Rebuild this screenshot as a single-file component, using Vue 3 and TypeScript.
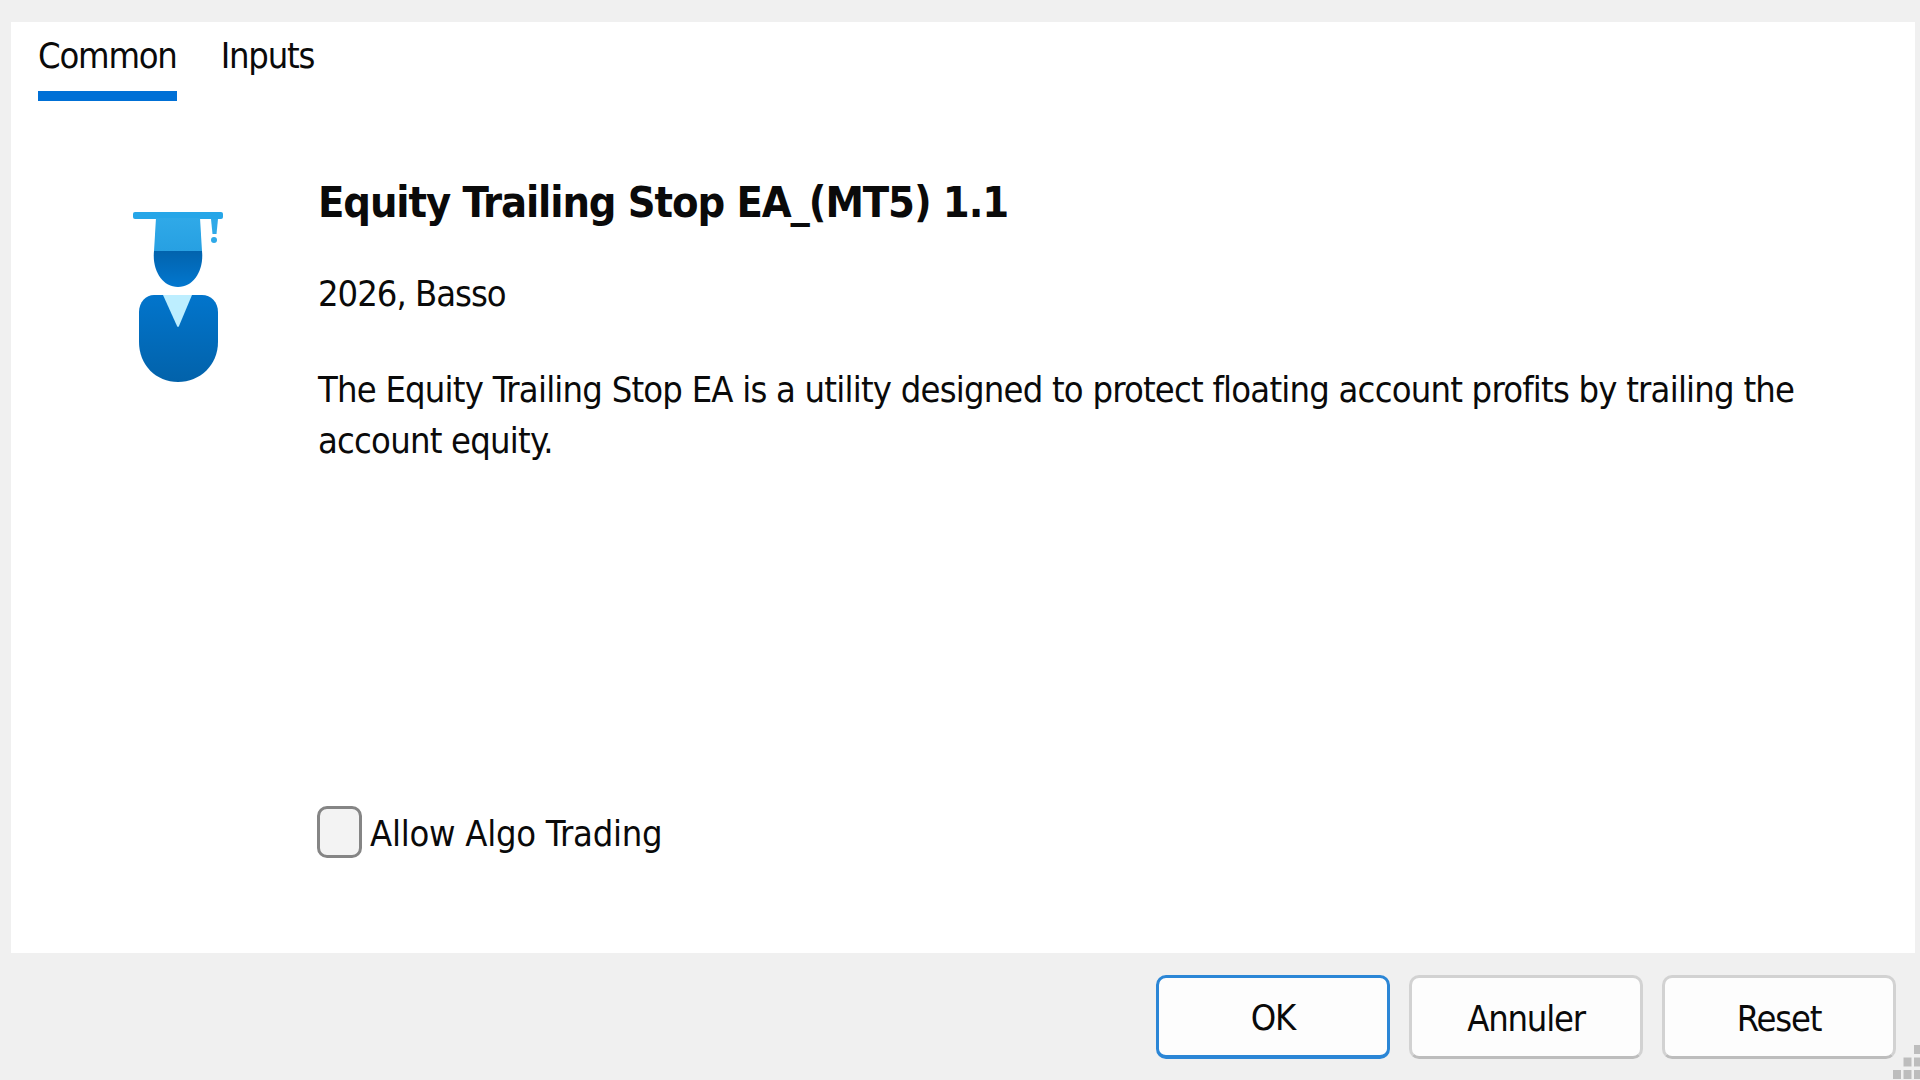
<template>
  <div class="dialog">
    <div class="panel">
      <div class="tabs">
        <div v-for="(t, i) in tabs" :key="t" class="tab" :class="{ active: i === 0 }">{{ t }}</div>
      </div>
      <div class="content">
        <div class="icon-col">
          <svg class="icon" width="150" height="200" viewBox="0 0 150 200">
            <defs>
              <linearGradient id="capG" x1="0" y1="0" x2="0" y2="1">
                <stop offset="0" stop-color="#2fa9e8" />
                <stop offset="1" stop-color="#27a0e2" />
              </linearGradient>
              <linearGradient id="headG" x1="0" y1="0" x2="0" y2="1">
                <stop offset="0" stop-color="#0263ad" />
                <stop offset="1" stop-color="#0277cf" />
              </linearGradient>
              <linearGradient id="bodyG" x1="0" y1="0" x2="0" y2="1">
                <stop offset="0" stop-color="#0275cc" />
                <stop offset="1" stop-color="#0262aa" />
              </linearGradient>
            </defs>
            <path d="M23 24 Q23 22 25 22 L111 22 Q113 22 113 24 L113 27 Q113 29 111 29 L25 29 Q23 29 23 27 Z" fill="#26a6e8" />
            <path d="M46 28 L90 28 L92 61 L44 61 Z" fill="url(#capG)" />
            <path d="M44 61 L92 61 C94 80 84 97 68 97 C52 97 42 80 44 61 Z" fill="url(#headG)" />
            <path d="M101 29 L108 29 L106.500 44 L102.500 44 Z" fill="#2fa9e8" />
            <circle cx="104" cy="50" r="3" fill="#2fa9e8" />
            <path d="M44 105 L92 105 C101 105 108 112 108 122 L108 152 C108 175 90 192 68 192 C46 192 29 175 29 152 L29 122 C29 112 36 105 44 105 Z" fill="url(#bodyG)" />
            <path d="M53 105 L82 105 L69 136 Q68 138 67 136 Z" fill="#bdeeff" />
          </svg>
        </div>
        <div class="text-col">
          <h1 class="title">Equity Trailing Stop EA_(MT5) 1.1</h1>
          <div class="author">2026, Basso</div>
          <p class="desc">The Equity Trailing Stop EA is a utility designed to protect floating account profits by trailing the account equity.</p>
          <label class="allow">
            <span class="box"></span>
            <span class="allow-label">Allow Algo Trading</span>
          </label>
        </div>
      </div>
    </div>
    <div class="footer">
      <button v-for="(b, i) in buttons" :key="b" class="btn" :class="{ primary: i === 0 }">
        <span class="btn-label">{{ b }}</span>
      </button>
      <svg class="grip" width="27" height="35" viewBox="0 0 27 35">
        <rect v-for="(d, i) in gripDots" :key="i" :x="d[0]" :y="d[1]" width="8" height="9" fill="#bdbdbd" />
      </svg>
    </div>
  </div>
</template>

<script setup lang="ts">
const tabs: string[] = ['Common', 'Inputs']
const buttons: string[] = ['OK', 'Annuler', 'Reset']
const gripDots: Array<[number, number]> = [
  [21, 0],
  [10.5, 12.5],
  [21, 12.5],
  [0, 25],
  [10.5, 25],
  [21, 25]
]
</script>

<style>
html,
body {
  margin: 0;
  background: #f0f0f0;
}
</style>

<style scoped>
.dialog {
  position: relative;
  width: 1920px;
  height: 1080px;
  box-sizing: border-box;
  padding: 22px 5px 0 11px;
  background: #f0f0f0;
  display: flex;
  flex-direction: column;
  overflow: hidden;
  font-family: 'DejaVu Sans', sans-serif;
  font-stretch: condensed;
  font-size: 36px;
  color: #0a0a0a;
}
.panel {
  height: 931px;
  background: #fff;
  display: flex;
  flex-direction: column;
}
.tabs {
  display: flex;
  gap: 44px;
  padding-left: 27px;
  height: 79px;
}
.tab {
  height: 79px;
  box-sizing: border-box;
  padding-top: 10px;
  line-height: 48px;
  letter-spacing: -1.2px;
}
.tab.active {
  border-bottom: 10px solid #0070d6;
}
.content {
  flex: 1;
  display: flex;
  min-height: 0;
}
.icon-col {
  width: 307px;
  padding: 89px 0 0 99px;
  box-sizing: border-box;
  flex: none;
}
.icon {
  display: block;
}
.text-col {
  flex: 1;
  min-width: 0;
  display: flex;
  flex-direction: column;
  padding-right: 90px;
}
.title {
  margin: 73px 0 0;
  font-size: 43px;
  font-weight: 700;
  line-height: 56px;
  letter-spacing: -1.1px;
}
.author {
  margin-top: 39px;
  line-height: 50px;
  letter-spacing: -1px;
}
.desc {
  margin: 45px 0 0;
  line-height: 51px;
  letter-spacing: -0.78px;
}
.allow {
  margin-top: auto;
  margin-bottom: 95px;
  margin-left: -1px;
  display: flex;
  align-items: center;
  gap: 8px;
}
.box {
  width: 45px;
  height: 52px;
  box-sizing: border-box;
  border: 3px solid #858585;
  border-radius: 10px;
  background: #f3f3f3;
}
.allow-label {
  letter-spacing: -0.25px;
  padding-top: 2px;
}
.footer {
  flex: 1;
  display: flex;
  justify-content: flex-end;
  align-items: flex-start;
  gap: 19px;
  padding: 22px 19px 0 0;
}
.btn {
  width: 234px;
  height: 84px;
  box-sizing: border-box;
  background: #fdfdfd;
  border: 3px solid #d2d2d2;
  border-bottom-color: #bdbdbd;
  border-radius: 10px;
  font: inherit;
  font-stretch: condensed;
  color: #0a0a0a;
  padding: 2px 0 0;
  letter-spacing: -1.2px;
}
.btn.primary {
  border: 3px solid #2b86d6;
  border-bottom-width: 4px;
}
.grip {
  position: absolute;
  right: 0;
  bottom: 0;
}
</style>
